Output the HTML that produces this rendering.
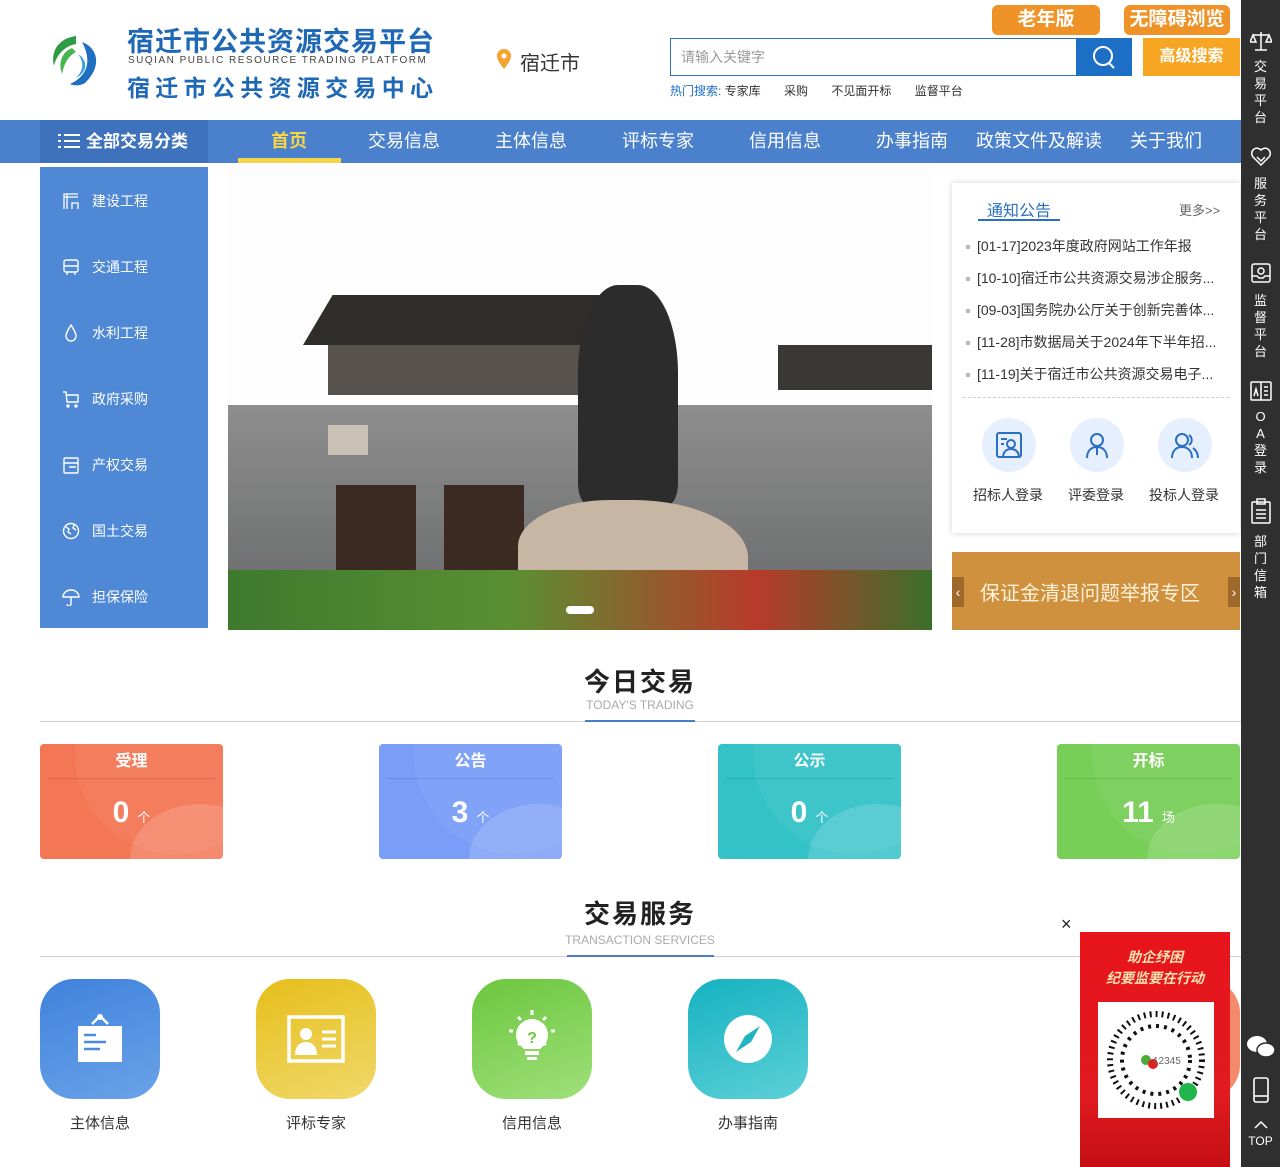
<!DOCTYPE html>
<html><head><meta charset="utf-8">
<style>
*{margin:0;padding:0;box-sizing:border-box}
body{width:1280px;height:1167px;overflow:hidden;background:#fff;font-family:"Liberation Sans","Noto Sans CJK SC",sans-serif;position:relative;color:#333}
.abs{position:absolute}
.nav{top:120px;left:0;width:1241px;height:43px;background:#4a80cc}
.nav a{position:absolute;top:0;line-height:43px;color:#fff;font-size:18px;transform:translateX(-50%);white-space:nowrap}
.side{left:40px;top:167px;width:168px;height:461px;background:#4f88d4}
.side div{position:absolute;left:22px;color:#fff;font-size:14px;display:flex;align-items:center;gap:12px}
.side svg{width:18px;height:18px}
.rbar{left:1241px;top:0;width:39px;height:1167px;background:#2f2f2f;color:#fff;font-size:13px;text-align:center}
.rbar .t{position:absolute;left:0;width:39px;line-height:17px}
.card{top:744px;width:183px;height:115px;border-radius:4px;overflow:hidden;color:#fff;text-align:center}
.card .h{position:absolute;top:8px;left:8px;right:8px;height:27px;border-bottom:1px solid rgba(0,0,0,.12);font-size:16px;font-weight:bold;line-height:20px}
.card .n{position:absolute;top:52px;left:0;right:0;font-size:30px;font-weight:bold}
.card .n span{font-size:13px;font-weight:normal;margin-left:8px}
.card .c1{position:absolute;width:200px;height:200px;border-radius:50%;background:rgba(255,255,255,.05);left:35px;top:-90px}
.card .c2{position:absolute;width:140px;height:110px;border-radius:50%;background:rgba(255,255,255,.15);left:90px;top:60px}
.svc{top:979px;width:120px;height:120px;border-radius:34px}
.svl{top:1112px;font-size:15px;color:#333;width:120px;text-align:center}
.ttl{left:0;width:1280px;text-align:center}
.news div{position:absolute;left:966px;font-size:14px;color:#333;white-space:nowrap}
.news div:before{content:"";display:inline-block;width:4px;height:4px;background:#bbb;margin-right:7px;vertical-align:middle}
.lg{width:54px;height:54px;border-radius:50%;background:#e6effd;display:flex;align-items:center;justify-content:center}
</style></head><body>

<!-- logo -->
<svg class="abs" style="left:46px;top:32px" width="58" height="56" viewBox="0 0 58 56">
<path d="M30 4 C14 6 4 18 8 34 C10 24 18 14 30 12Z" fill="#2e9c46"/>
<path d="M26 16 C16 20 12 30 16 42 C18 32 22 24 30 20Z" fill="#4ab54f"/>
<path d="M36 10 C52 16 56 34 40 50 C36 54 28 54 24 52 C38 46 48 32 36 10Z" fill="#1e6fc0"/>
<path d="M32 22 C42 28 42 40 30 46 C38 38 38 30 32 22Z" fill="#3d9ee0"/>
</svg>
<div class="abs" style="left:127px;top:20px;font-size:27px;font-weight:bold;color:#1f68b5;letter-spacing:1px;white-space:nowrap">宿迁市公共资源交易平台</div>
<div class="abs" style="left:128px;top:55px;font-size:10px;color:#444;letter-spacing:1.5px;white-space:nowrap">SUQIAN PUBLIC RESOURCE TRADING PLATFORM</div>
<div class="abs" style="left:127px;top:69px;font-size:23px;font-weight:bold;color:#1f68b5;letter-spacing:5.3px;white-space:nowrap">宿迁市公共资源交易中心</div>
<svg class="abs" style="left:497px;top:49px" width="14" height="20" viewBox="0 0 14 20"><path d="M7 0C3 0 0 3 0 7c0 5 7 13 7 13s7-8 7-13C14 3 11 0 7 0z" fill="#f3a530"/><circle cx="7" cy="7" r="2.5" fill="#fff"/></svg>
<div class="abs" style="left:520px;top:47px;font-size:20px;color:#333">宿迁市</div>

<!-- top buttons -->
<div class="abs" style="left:992px;top:5px;width:108px;height:30px;background:#ef9227;border-radius:6px;color:#fff;font-weight:bold;font-size:19px;text-align:center;line-height:30px">老年版</div>
<div class="abs" style="left:1124px;top:5px;width:106px;height:30px;background:#ef9227;border-radius:6px;color:#fff;font-weight:bold;font-size:19px;text-align:center;line-height:30px">无障碍浏览</div>
<div class="abs" style="left:670px;top:38px;width:408px;height:38px;border:1px solid #2f6fc0;padding-left:10px;line-height:36px;font-size:14px;color:#999">请输入关键字</div>
<div class="abs" style="left:1076px;top:38px;width:56px;height:38px;background:#1c6fc4"><svg width="56" height="38"><circle cx="27" cy="18" r="9" fill="none" stroke="#fff" stroke-width="2"/><path d="M33 25l5 5" stroke="#fff" stroke-width="2"/></svg></div>
<div class="abs" style="left:1143px;top:38px;width:97px;height:38px;background:#f6a623;color:#fff;font-size:16px;font-weight:bold;text-align:center;line-height:38px">高级搜索</div>
<div class="abs" style="left:670px;top:82px;font-size:12px;color:#333;white-space:nowrap"><span style="color:#1c6fc4">热门搜索:</span> 专家库 &nbsp;&nbsp;&nbsp;&nbsp;&nbsp;&nbsp;采购 &nbsp;&nbsp;&nbsp;&nbsp;&nbsp;&nbsp;不见面开标 &nbsp;&nbsp;&nbsp;&nbsp;&nbsp;&nbsp;监督平台</div>

<!-- nav -->
<div class="abs nav">
 <div class="abs" style="left:40px;top:0;width:168px;height:43px;background:#3e72bd;color:#fff;font-size:17px;font-weight:bold;line-height:43px;padding-left:18px;white-space:nowrap">
 <svg width="22" height="16" style="vertical-align:-2px;margin-right:6px"><g fill="#fff"><rect x="0" y="1" width="3" height="2"/><rect x="6" y="1" width="16" height="2"/><rect x="0" y="7" width="3" height="2"/><rect x="6" y="7" width="16" height="2"/><rect x="0" y="13" width="3" height="2"/><rect x="6" y="13" width="16" height="2"/></g></svg>全部交易分类</div>
 <a style="left:289px;color:#f6d548;font-weight:bold">首页</a>
 <div class="abs" style="left:238px;top:38px;width:103px;height:5px;background:#f6d548"></div>
 <a style="left:404px">交易信息</a><a style="left:531px">主体信息</a><a style="left:658px">评标专家</a><a style="left:785px">信用信息</a><a style="left:912px">办事指南</a><a style="left:1039px">政策文件及解读</a><a style="left:1166px">关于我们</a>
</div>

<!-- side menu -->
<div class="abs side">
 <div style="top:24px"><svg viewBox="0 0 18 18" fill="none" stroke="#fff" stroke-width="1.3"><path d="M2 17V2h14M5 2v15M2 5h14M10 17v-6h6v6"/></svg>建设工程</div>
 <div style="top:90px"><svg viewBox="0 0 18 18" fill="none" stroke="#fff" stroke-width="1.4"><rect x="2" y="2" width="14" height="12" rx="2"/><path d="M2 8h14M5 14v3M13 14v3"/></svg>交通工程</div>
 <div style="top:156px"><svg viewBox="0 0 18 18" fill="none" stroke="#fff" stroke-width="1.4"><path d="M9 1C6 6 4 9 4 12a5 5 0 0010 0c0-3-2-6-5-11z"/></svg>水利工程</div>
 <div style="top:222px"><svg viewBox="0 0 18 18" fill="none" stroke="#fff" stroke-width="1.4"><path d="M1 2h3l1 10h11V5H5"/><circle cx="6" cy="16" r="1"/><circle cx="14" cy="16" r="1"/></svg>政府采购</div>
 <div style="top:288px"><svg viewBox="0 0 18 18" fill="none" stroke="#fff" stroke-width="1.4"><rect x="2" y="2" width="14" height="15" rx="1"/><path d="M2 7h14M7 11h7"/></svg>产权交易</div>
 <div style="top:354px"><svg viewBox="0 0 18 18" fill="none" stroke="#fff" stroke-width="1.4"><circle cx="9" cy="9" r="7.5"/><path d="M4 5l3 2-1 3 3 2M12 3l-1 3 3 2"/></svg>国土交易</div>
 <div style="top:420px"><svg viewBox="0 0 18 18" fill="none" stroke="#fff" stroke-width="1.4"><path d="M1 9a8 7 0 0116 0zM9 9v7a2 2 0 01-4 0"/></svg>担保保险</div>
</div>

<!-- banner -->
<div class="abs" style="left:228px;top:165px;width:704px;height:465px;overflow:hidden;background:#fdfdfd">
 <div class="abs" style="left:0;top:240px;width:704px;height:180px;background:linear-gradient(#8e8e8e,#6e6f70)"></div>
 <div class="abs" style="left:75px;top:130px;width:370px;height:50px;background:#2f2d2a;clip-path:polygon(8% 0,92% 0,100% 100%,0 100%)"></div>
 <div class="abs" style="left:100px;top:180px;width:320px;height:50px;background:#57524d"></div>
 <div class="abs" style="left:550px;top:180px;width:154px;height:45px;background:#3a3834"></div>
 <div class="abs" style="left:100px;top:260px;width:40px;height:30px;background:#c9c2b4"></div>
 <div class="abs" style="left:108px;top:320px;width:80px;height:100px;background:#3b2a22"></div>
 <div class="abs" style="left:216px;top:320px;width:80px;height:100px;background:#3b2a22"></div>
 <div class="abs" style="left:350px;top:120px;width:100px;height:220px;background:#2c2c2c;border-radius:40% 40% 10% 10%"></div>
 <div class="abs" style="left:290px;top:335px;width:230px;height:115px;background:#c8b6a5;border-radius:40% 50% 10% 10%"></div>
 <div class="abs" style="left:0;top:405px;width:704px;height:60px;background:linear-gradient(90deg,#3e7a2e,#5a8f33 40%,#b83a2a 75%,#3b6f2a)"></div>
 <div class="abs" style="left:338px;top:441px;width:28px;height:8px;border-radius:4px;background:#fff"></div>
</div>

<!-- notice -->
<div class="abs" style="left:952px;top:183px;width:288px;height:350px;background:#fff;box-shadow:0 0 6px rgba(0,0,0,.18)"></div>
<div class="abs" style="left:987px;top:197px;font-size:16px;color:#2a6fc0">通知公告</div>
<div class="abs" style="left:978px;top:219px;width:82px;height:2px;background:#2a6fc0"></div>
<div class="abs" style="left:1179px;top:200px;font-size:13px;color:#666">更多&gt;&gt;</div>
<div class="news">
 <div style="top:236px">[01-17]2023年度政府网站工作年报</div>
 <div style="top:268px">[10-10]宿迁市公共资源交易涉企服务...</div>
 <div style="top:300px">[09-03]国务院办公厅关于创新完善体...</div>
 <div style="top:332px">[11-28]市数据局关于2024年下半年招...</div>
 <div style="top:364px">[11-19]关于宿迁市公共资源交易电子...</div>
</div>
<div class="abs" style="left:963px;top:397px;width:266px;border-top:1px dashed #ccc"></div>
<div class="abs lg" style="left:982px;top:418px"><svg width="30" height="30" viewBox="0 0 30 30" fill="none" stroke="#2a6fc0" stroke-width="2"><rect x="3" y="3" width="24" height="24" rx="2"/><circle cx="17" cy="14" r="4"/><path d="M9 26c1-5 4-7 8-7s7 2 8 7M7 9h6M7 14h3"/></svg></div>
<div class="abs lg" style="left:1070px;top:418px"><svg width="30" height="30" viewBox="0 0 30 30" fill="none" stroke="#2a6fc0" stroke-width="2"><circle cx="15" cy="10" r="6"/><path d="M5 28c0-7 4-11 10-11s10 4 10 11M15 18v7"/></svg></div>
<div class="abs lg" style="left:1158px;top:418px"><svg width="30" height="30" viewBox="0 0 30 30" fill="none" stroke="#2a6fc0" stroke-width="2"><circle cx="12" cy="10" r="6"/><path d="M2 28c0-7 4-11 10-11s10 4 10 11M19 5a6 6 0 010 10M23 18c3 2 5 5 5 10"/></svg></div>
<div class="abs" style="left:973px;top:485px;font-size:14px;color:#333">招标人登录</div>
<div class="abs" style="left:1068px;top:485px;font-size:14px;color:#333">评委登录</div>
<div class="abs" style="left:1149px;top:485px;font-size:14px;color:#333">投标人登录</div>

<!-- orange banner -->
<div class="abs" style="left:952px;top:552px;width:288px;height:78px;background:#cf913e"></div>
<div class="abs" style="left:952px;top:577px;width:12px;height:30px;background:#9e6a2a;color:#fff;font-size:14px;text-align:center;line-height:30px">‹</div>
<div class="abs" style="left:1228px;top:577px;width:12px;height:30px;background:#9e6a2a;color:#fff;font-size:14px;text-align:center;line-height:30px">›</div>
<div class="abs" style="left:980px;top:577px;font-size:20px;color:#fff2dc">保证金清退问题举报专区</div>

<!-- right bar -->
<div class="abs rbar">
 <svg class="abs" style="left:9px;top:30px" width="22" height="22" viewBox="0 0 22 22" fill="none" stroke="#fff" stroke-width="1.5"><path d="M11 2v18M5 20h12M3 5h16M3 5l-3 7h6zM19 5l-3 7h6z"/></svg>
 <div class="t" style="top:58px">交<br>易<br>平<br>台</div>
 <svg class="abs" style="left:9px;top:145px" width="22" height="22" viewBox="0 0 22 22" fill="none" stroke="#fff" stroke-width="1.5"><path d="M11 20L3 12a5 5 0 018-7 5 5 0 018 7z M7 12l4 4 4-4"/></svg>
 <div class="t" style="top:175px">服<br>务<br>平<br>台</div>
 <svg class="abs" style="left:9px;top:262px" width="22" height="22" viewBox="0 0 22 22" fill="none" stroke="#fff" stroke-width="1.5"><rect x="2" y="2" width="18" height="18" rx="2"/><circle cx="11" cy="9" r="3"/><path d="M2 14h5l2 2h4l2-2h5"/></svg>
 <div class="t" style="top:292px">监<br>督<br>平<br>台</div>
 <svg class="abs" style="left:9px;top:380px" width="22" height="22" viewBox="0 0 22 22" fill="none" stroke="#fff" stroke-width="1.5"><rect x="1" y="2" width="20" height="18" rx="1"/><path d="M11 2v18M14 7h4M14 11h4M14 15h4M4 16l2-7 2 7"/></svg>
 <div class="t" style="top:408px">O<br>A<br>登<br>录</div>
 <svg class="abs" style="left:10px;top:498px" width="20" height="26" viewBox="0 0 20 26" fill="none" stroke="#fff" stroke-width="1.5"><rect x="1" y="4" width="18" height="21" rx="1"/><rect x="6" y="1" width="8" height="5"/><path d="M5 12h10M5 16h10M5 20h10"/></svg>
 <div class="t" style="top:533px">部<br>门<br>信<br>箱</div>
 <svg class="abs" style="left:6px;top:1035px" width="28" height="24" viewBox="0 0 28 24" fill="#fff"><ellipse cx="10" cy="9" rx="10" ry="8"/><ellipse cx="19" cy="15" rx="9" ry="7" stroke="#2f2f2f" stroke-width="1.5"/></svg>
 <svg class="abs" style="left:12px;top:1077px" width="16" height="26" viewBox="0 0 16 26" fill="none" stroke="#fff" stroke-width="1.6"><rect x="1" y="1" width="14" height="24" rx="2"/><path d="M1 19h14"/></svg>
 <svg class="abs" style="left:13px;top:1121px" width="14" height="8"><path d="M1 7l6-6 6 6" stroke="#fff" stroke-width="1.5" fill="none"/></svg>
 <div class="t" style="top:1133px;font-size:12px">TOP</div>
</div>

<!-- 今日交易 -->
<div class="abs ttl" style="top:662px;font-size:26px;font-weight:bold;color:#222;letter-spacing:2px">今日交易</div>
<div class="abs ttl" style="top:698px;font-size:12px;color:#aaa">TODAY'S TRADING</div>
<div class="abs" style="left:40px;top:721px;width:1201px;height:1px;background:#ccc"></div>
<div class="abs" style="left:585px;top:720px;width:110px;height:2px;background:#4a7bc4"></div>

<div class="abs card" style="left:40px;background:#f47755"><div class="c1"></div><div class="c2"></div><div class="h">受理</div><div class="n">0<span>个</span></div></div>
<div class="abs card" style="left:379px;background:#7a9df7"><div class="c1"></div><div class="c2"></div><div class="h">公告</div><div class="n">3<span>个</span></div></div>
<div class="abs card" style="left:718px;background:#33c2c8"><div class="c1"></div><div class="c2"></div><div class="h">公示</div><div class="n">0<span>个</span></div></div>
<div class="abs card" style="left:1057px;background:#78cf58"><div class="c1"></div><div class="c2"></div><div class="h">开标</div><div class="n">11<span>场</span></div></div>

<!-- 交易服务 -->
<div class="abs ttl" style="top:894px;font-size:26px;font-weight:bold;color:#222;letter-spacing:2px">交易服务</div>
<div class="abs ttl" style="top:933px;font-size:12px;color:#aaa">TRANSACTION SERVICES</div>
<div class="abs" style="left:40px;top:956px;width:1201px;height:1px;background:#ccc"></div>
<div class="abs" style="left:567px;top:955px;width:147px;height:2px;background:#4a7bc4"></div>

<div class="abs svc" style="left:40px;background:linear-gradient(160deg,#3f82dc,#6aa2e8)"><svg width="120" height="120"><path d="M52 45l8-8 8 8" stroke="#fff" stroke-width="2.5" fill="none"/><circle cx="60" cy="38" r="3" fill="#fff"/><rect x="38" y="47" width="44" height="36" fill="#fff"/><path d="M44 56h12M44 63h22M44 70h16" stroke="#4a8ae0" stroke-width="2.5"/></svg></div>
<div class="abs svc" style="left:256px;background:linear-gradient(160deg,#e6bf1a,#f0d86a)"><svg width="120" height="120"><rect x="33" y="38" width="54" height="44" fill="none" stroke="#fff" stroke-width="3.5"/><circle cx="50" cy="55" r="6" fill="#fff"/><path d="M39 76c0-9 5-13 11-13s11 4 11 13z" fill="#fff"/><path d="M66 53h14M66 60h14M66 67h14" stroke="#fff" stroke-width="3"/></svg></div>
<div class="abs svc" style="left:472px;background:linear-gradient(160deg,#6cc63e,#9ee07a)"><svg width="120" height="120"><path d="M52 70c-6-5-8-9-8-14a16 16 0 0132 0c0 5-2 9-8 14z" fill="#fff"/><rect x="53" y="72" width="14" height="4" fill="#fff"/><rect x="55" y="78" width="10" height="3" fill="#fff"/><text x="60" y="64" font-size="16" font-weight="bold" fill="#6cc63e" text-anchor="middle">?</text><path d="M60 31v5M41 52h-4M83 52h-4M46 38l3 3M74 38l-3 3M46 66l3-3M74 66l-3-3" stroke="#fff" stroke-width="3"/></svg></div>
<div class="abs svc" style="left:688px;background:linear-gradient(160deg,#14b2c0,#5dd0d8)"><svg width="120" height="120"><circle cx="60" cy="60" r="24" fill="#fff"/><path d="M72 47L63 63 48 73 57 57z" fill="#1fb5c2"/></svg></div>
<div class="abs svc" style="left:1120px;background:#f58a6a"></div>
<div class="abs svl" style="left:40px">主体信息</div>
<div class="abs svl" style="left:256px">评标专家</div>
<div class="abs svl" style="left:472px">信用信息</div>
<div class="abs svl" style="left:688px">办事指南</div>

<!-- popup -->
<div class="abs" style="left:1061px;top:914px;font-size:18px;color:#222">×</div>
<div class="abs" style="left:1080px;top:932px;width:150px;height:235px;background:linear-gradient(#e8141c,#e01a20 70%,#c40e14)">
 <div style="text-align:center;color:#ffe2b0;font-weight:bold;font-style:italic;font-size:14px;line-height:21px;margin-top:15px">助企纾困<br>纪要监要在行动</div>
 <div class="abs" style="left:18px;top:70px;width:116px;height:116px;background:#fff">
  <svg width="116" height="116"><circle cx="58" cy="58" r="46" fill="none" stroke="#111" stroke-width="6" stroke-dasharray="2 4"/><circle cx="58" cy="58" r="34" fill="none" stroke="#111" stroke-width="4" stroke-dasharray="3 5"/><circle cx="58" cy="58" r="24" fill="#fff"/><circle cx="48" cy="58" r="5" fill="#4aaa3a"/><circle cx="55" cy="62" r="5" fill="#e02020"/><text x="55" y="62" font-size="10" fill="#666">12345</text><circle cx="90" cy="90" r="9" fill="#1fb54a"/></svg>
 </div>
</div>
</body></html>
